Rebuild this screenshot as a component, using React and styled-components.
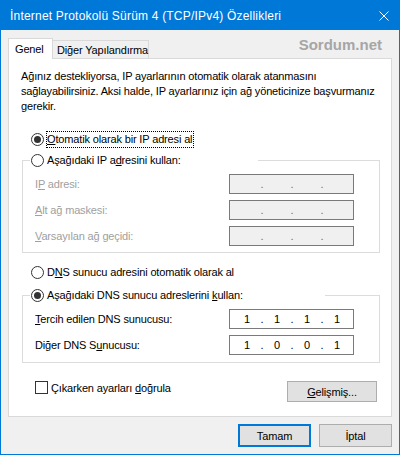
import React from "react";
import styled, { createGlobalStyle } from "styled-components";

const FONT = '"Liberation Sans", Arial, sans-serif';

const Global = createGlobalStyle`
  html, body { margin: 0; padding: 0; background: #ffffff; }
  body { font-family: ${FONT}; font-size: 11px; color: #000; letter-spacing: -0.15px; }
  * { box-sizing: border-box; }
`;

const Window = styled.div`
  width: 400px;
  height: 455px;
  border: 1px solid #0078d7;
  display: flex;
  flex-direction: column;
  background: #f0f0f0;
`;

const TitleBar = styled.div`
  height: 29px;
  flex: none;
  background: #0078d7;
  color: #fff;
  display: flex;
  align-items: center;
  justify-content: space-between;
  padding: 0 10px 0 9px;
  font-size: 12px;
  letter-spacing: 0.2px;
`;

const Body = styled.div`
  flex: 1;
  display: flex;
  flex-direction: column;
  padding: 8px 7px 7px 7px;
`;

const TabRow = styled.div`
  display: flex;
  align-items: flex-end;
  height: 20px;
  flex: none;
  position: relative;
  z-index: 1;
`;

const Tab = styled.div`
  display: flex;
  align-items: center;
  border: 1px solid #d9d9d9;
  border-bottom: none;
  background: ${(p) => (p.$active ? "#ffffff" : "#f0f0f0")};
  width: ${(p) => p.$w}px;
  height: ${(p) => (p.$active ? 21 : 18)}px;
  margin-bottom: ${(p) => (p.$active ? -1 : 0)}px;
  margin-left: ${(p) => (p.$active ? 0 : -1)}px;
  padding-left: ${(p) => (p.$active ? 6 : 4)}px;
  padding-top: ${(p) => (p.$active ? 0 : 1)}px;
  white-space: nowrap;
`;

const Watermark = styled.div`
  margin-left: auto;
  align-self: flex-start;
  margin-top: -2px;
  margin-right: 10px;
  font-family: ${FONT};
  font-weight: bold;
  font-size: 15px;
  line-height: 17px;
  letter-spacing: 0;
  color: #a6a6a6;
`;

const Panel = styled.div`
  flex: 1;
  display: flex;
  flex-direction: column;
  background: #ffffff;
  border: 1px solid #d9d9d9;
  padding: 10px 11px 0 12px;
`;

const Description = styled.div`
  line-height: 15px;
  white-space: nowrap;
  & > span { display: block; }
`;

const RadioRow = styled.div`
  display: flex;
  align-items: center;
  height: 17px;
  margin-top: ${(p) => p.$mt || 0}px;
  margin-left: ${(p) => (p.$ml === undefined ? 10 : p.$ml)}px;
  white-space: nowrap;
`;

const Radio = styled.span`
  flex: none;
  width: 13px;
  height: 13px;
  border: 1px solid #333333;
  border-radius: 50%;
  background: #fff;
  display: flex;
  align-items: center;
  justify-content: center;
  margin-right: 2px;
  &::after {
    content: "";
    width: 7px;
    height: 7px;
    border-radius: 50%;
    background: ${(p) => (p.$checked ? "#333333" : "transparent")};
  }
`;

const RadioLabel = styled.span`
  line-height: 15px;
  border: 1px dotted ${(p) => (p.$focus ? "#000" : "transparent")};
  padding: 0 1px 0 0;
`;

const Group = styled.fieldset`
  margin: ${(p) => p.$mt}px 0 0 1px;
  padding: 5px 25px ${(p) => p.$pb}px 7px;
  border: 1px solid #dcdcdc;
  min-width: 0;
`;

const Legend = styled.legend`
  padding: 0 0 0 1px;
  width: ${(p) => p.$w}px;
`;

const FieldRow = styled.div`
  display: flex;
  align-items: center;
  justify-content: space-between;
  height: 20px;
  margin-left: 5px;
  & + & { margin-top: 6px; }
`;

const FieldLabel = styled.span`
  color: ${(p) => (p.$disabled ? "#a0a0a0" : "#000")};
  white-space: nowrap;
`;

const IpBox = styled.div`
  width: 125px;
  height: 20px;
  border: 1px solid #7a7a7a;
  background: ${(p) => (p.$disabled ? "#f0f0f0" : "#ffffff")};
  display: flex;
  align-items: center;
  padding-left: 6px;
  color: ${(p) => (p.$disabled ? "#6d6d7d" : "#000")};
  letter-spacing: 0;
`;

const Seg = styled.span`
  width: 22px;
  text-align: center;
`;

const Dot = styled.span`
  width: 8px;
  text-align: center;
`;

const BottomRow = styled.div`
  display: flex;
  align-items: flex-start;
  justify-content: space-between;
  margin-top: 16px;
  margin-left: 14px;
`;

const CheckRow = styled.div`
  display: flex;
  align-items: center;
  height: 17px;
  white-space: nowrap;
`;

const CheckBox = styled.span`
  width: 13px;
  height: 13px;
  border: 1px solid #333333;
  background: #fff;
  margin-right: 3px;
  flex: none;
`;

const Button = styled.div`
  display: flex;
  align-items: center;
  justify-content: center;
  width: ${(p) => p.$w}px;
  height: ${(p) => p.$h}px;
  background: #e1e1e1;
  border: ${(p) => (p.$default ? "2px solid #0078d7" : "1px solid #adadad")};
  margin-top: ${(p) => p.$mt || 0}px;
  margin-right: ${(p) => p.$mr || 0}px;
  white-space: nowrap;
`;

const ButtonRow = styled.div`
  display: flex;
  justify-content: flex-end;
  gap: 8px;
  margin-top: 7px;
  flex: none;
`;

const U = styled.u`
  text-decoration: underline;
  text-underline-offset: 1px;
`;

const CloseIcon = () => (
  <svg width="10" height="10" viewBox="0 0 10 10">
    <path d="M0.5 0.5 L9.5 9.5 M9.5 0.5 L0.5 9.5" stroke="#fff" strokeWidth="1" />
  </svg>
);

const Ip = ({ values, disabled }) => (
  <IpBox $disabled={disabled}>
    <Seg>{values ? values[0] : ""}</Seg>
    <Dot>.</Dot>
    <Seg>{values ? values[1] : ""}</Seg>
    <Dot>.</Dot>
    <Seg>{values ? values[2] : ""}</Seg>
    <Dot>.</Dot>
    <Seg>{values ? values[3] : ""}</Seg>
  </IpBox>
);

export default function App() {
  return (
    <>
      <Global />
      <Window>
        <TitleBar>
          <span>İnternet Protokolü Sürüm 4 (TCP/IPv4) Özellikleri</span>
          <CloseIcon />
        </TitleBar>
        <Body>
          <TabRow>
            <Tab $active $w={45}>Genel</Tab>
            <Tab $w={97}>Diğer Yapılandırma</Tab>
            <Watermark>Sordum.net</Watermark>
          </TabRow>
          <Panel>
            <Description>
              <span>Ağınız destekliyorsa, IP ayarlarının otomatik olarak atanmasını</span>
              <span>sağlayabilirsiniz. Aksi halde, IP ayarlarınız için ağ yöneticinize başvurmanız</span>
              <span>gerekir.</span>
            </Description>

            <RadioRow $mt={17}>
              <Radio $checked />
              <RadioLabel $focus>
                <U>O</U>tomatik olarak bir IP adresi al
              </RadioLabel>
            </RadioRow>

            <Group $mt={4} $pb={6}>
              <Legend $w={228}>
                <RadioRow $ml={0}>
                  <Radio />
                  <RadioLabel>
                    Aşağıdaki IP a<U>d</U>resini kullan:
                  </RadioLabel>
                </RadioRow>
              </Legend>
              <FieldRow>
                <FieldLabel $disabled>
                  I<U>P</U> adresi:
                </FieldLabel>
                <Ip disabled />
              </FieldRow>
              <FieldRow>
                <FieldLabel $disabled>
                  <U>A</U>lt ağ maskesi:
                </FieldLabel>
                <Ip disabled />
              </FieldRow>
              <FieldRow>
                <FieldLabel $disabled>
                  <U>V</U>arsayılan ağ geçidi:
                </FieldLabel>
                <Ip disabled />
              </FieldRow>
            </Group>

            <RadioRow $mt={11}>
              <Radio />
              <RadioLabel>
                D<U>N</U>S sunucu adresini otomatik olarak al
              </RadioLabel>
            </RadioRow>

            <Group $mt={6} $pb={7}>
              <Legend $w={295}>
                <RadioRow $ml={0}>
                  <Radio $checked />
                  <RadioLabel>
                    Aşağıdaki DNS sunucu adreslerini <U>k</U>ullan:
                  </RadioLabel>
                </RadioRow>
              </Legend>
              <FieldRow>
                <FieldLabel>
                  <U>T</U>ercih edilen DNS sunucusu:
                </FieldLabel>
                <Ip values={["1", "1", "1", "1"]} />
              </FieldRow>
              <FieldRow>
                <FieldLabel>
                  Diğer DNS S<U>u</U>nucusu:
                </FieldLabel>
                <Ip values={["1", "0", "0", "1"]} />
              </FieldRow>
            </Group>

            <BottomRow>
              <CheckRow>
                <CheckBox />
                <span>
                  Çıkarken ayarları <U>d</U>oğrula
                </span>
              </CheckRow>
              <Button $w={90} $h={21} $mt={2} $mr={3}>
                <span>
                  <U>G</U>elişmiş...
                </span>
              </Button>
            </BottomRow>
          </Panel>
          <ButtonRow>
            <Button $default $w={73} $h={23}>
              Tamam
            </Button>
            <Button $w={73} $h={23}>
              İptal
            </Button>
          </ButtonRow>
        </Body>
      </Window>
    </>
  );
}
